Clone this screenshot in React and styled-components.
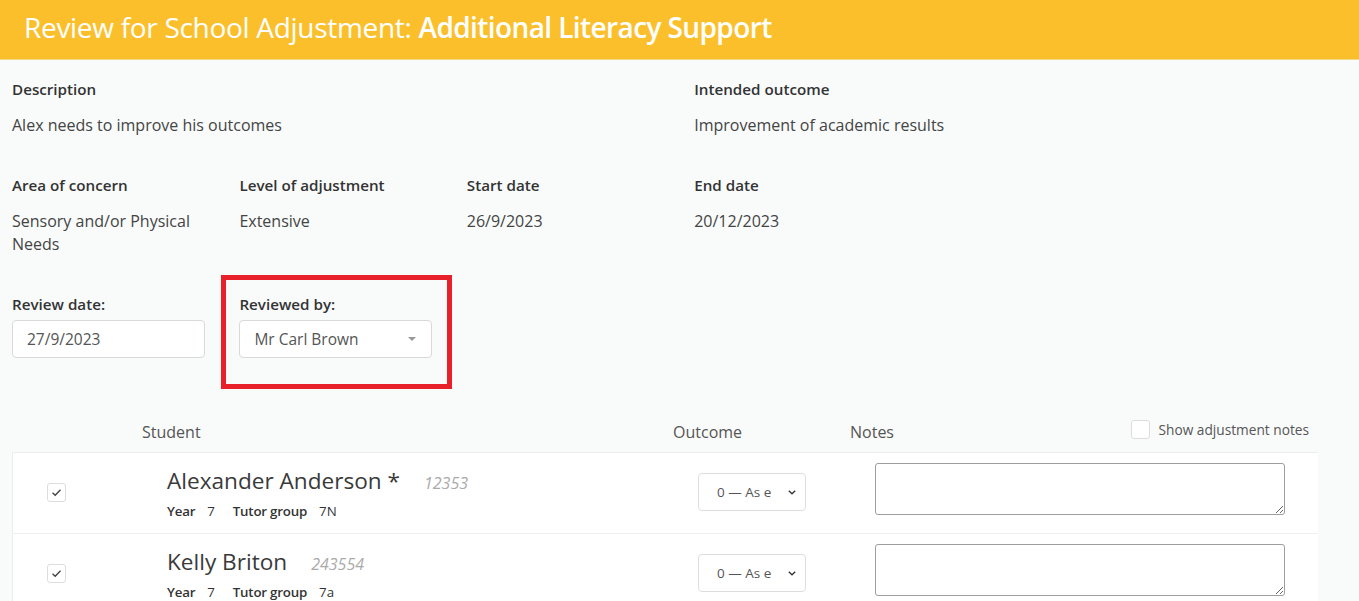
import React from "react";
import styled, { createGlobalStyle } from "styled-components";

const GlobalStyle = createGlobalStyle`
  html, body {
    margin: 0;
    padding: 0;
    background: #f9fbfb;
    font-family: "Open Sans", "Liberation Sans", sans-serif;
    color: #333;
  }
  * { box-sizing: border-box; }
`;

const students = [
  { name: "Alexander Anderson *", id: "12353", year: "7", group: "7N" },
  { name: "Kelly Briton", id: "243554", year: "7", group: "7a" },
];

function App() {
  return (
    <>
      <GlobalStyle />
      <Page>
        <Header>
          Review for School Adjustment: <strong>Additional Literacy Support</strong>
        </Header>

        <Details>
          <Field span={3}>
            <Label>Description</Label>
            <Value>Alex needs to improve his outcomes</Value>
          </Field>
          <Field span={3}>
            <Label>Intended outcome</Label>
            <Value>Improvement of academic results</Value>
          </Field>

          <Field>
            <Label>Area of concern</Label>
            <Value>Sensory and/or Physical Needs</Value>
          </Field>
          <Field>
            <Label>Level of adjustment</Label>
            <Value>Extensive</Value>
          </Field>
          <Field>
            <Label>Start date</Label>
            <Value>26/9/2023</Value>
          </Field>
          <Field span={3}>
            <Label>End date</Label>
            <Value>20/12/2023</Value>
          </Field>

          <FormField>
            <Label>Review date:</Label>
            <TextInput defaultValue="27/9/2023" />
          </FormField>
          <FormField>
            <Label>Reviewed by:</Label>
            <Dropdown>
              <span>Mr Carl Brown</span>
              <Caret />
            </Dropdown>
            <Highlight />
          </FormField>
        </Details>

        <TableHead>
          <HeadCell>Student</HeadCell>
          <HeadCell>Outcome</HeadCell>
          <HeadCell>Notes</HeadCell>
          <ToggleNotes>
            <Box />
            Show adjustment notes
          </ToggleNotes>
        </TableHead>

        <Table>
          {students.map((s) => (
            <Row key={s.id}>
              <CheckCell>
                <Box>
                  <svg width="11" height="9" viewBox="0 0 11 9">
                    <path d="M1.5 4.8 L4.2 7.2 L9.5 1.8" fill="none" stroke="#444" strokeWidth="1.4" />
                  </svg>
                </Box>
              </CheckCell>
              <StudentCell>
                <NameLine>
                  <Name>{s.name}</Name>
                  <StudentId>{s.id}</StudentId>
                </NameLine>
                <Meta>
                  <b>Year</b>
                  <span>{s.year}</span>
                  <b className="gap">Tutor group</b>
                  <span>{s.group}</span>
                </Meta>
              </StudentCell>
              <OutcomeCell>
                <OutcomeSelect>
                  <span>0 — As e</span>
                  <svg width="10" height="7" viewBox="0 0 10 7">
                    <path d="M1.8 1.8 L5 4.8 L8.2 1.8" fill="none" stroke="#333" strokeWidth="1.3" />
                  </svg>
                </OutcomeSelect>
              </OutcomeCell>
              <NotesCell>
                <Notes />
              </NotesCell>
            </Row>
          ))}
        </Table>
      </Page>
    </>
  );
}

export default App;

const Page = styled.div`
  min-height: 601px;
`;

const Header = styled.h1`
  margin: 0;
  height: 60px;
  background: #fcbf2c;
  border-bottom: 1px solid #f4d88a;
  color: #fff;
  font-size: 28px;
  font-weight: 400;
  line-height: 55px;
  padding-left: 24px;
  letter-spacing: -0.3px;

  strong {
    font-weight: 600;
    letter-spacing: -0.6px;
  }
`;

const Details = styled.div`
  display: grid;
  grid-template-columns: repeat(6, 227.4px);
  row-gap: 37px;
  padding: 18px 12px 0;
`;

const Field = styled.div`
  grid-column: span ${(p) => p.span || 1};
  padding-right: 20px;
`;

const Label = styled.div`
  font-size: 15.2px;
  font-weight: 600;
  line-height: 22px;
  color: #333;
`;

const Value = styled.div`
  margin-top: 14px;
  font-size: 16px;
  line-height: 23px;
  color: #444;
`;

const FormField = styled.div`
  position: relative;
  width: 193px;

  ${Label} {
    margin-bottom: 5px;
  }
`;

const TextInput = styled.input`
  width: 193px;
  height: 38px;
  border: 1px solid #d9d9d9;
  border-radius: 4px;
  background: #fff;
  padding: 0 14px;
  font-family: inherit;
  font-size: 15.5px;
  color: #555;
`;

const Dropdown = styled.div`
  width: 193px;
  height: 38px;
  border: 1px solid #d9d9d9;
  border-radius: 4px;
  background: #fff;
  padding: 0 14px;
  display: flex;
  align-items: center;
  justify-content: space-between;
  font-size: 15.5px;
  color: #555;
`;

const Caret = styled.span`
  width: 0;
  height: 0;
  border-left: 4.5px solid transparent;
  border-right: 4.5px solid transparent;
  border-top: 4.5px solid #999;
  margin-right: 1px;
`;

const Highlight = styled.div`
  position: absolute;
  left: -18px;
  top: -18px;
  width: 231px;
  height: 114px;
  border: 5px solid #e8202a;
`;

const TableHead = styled.div`
  display: grid;
  grid-template-columns: 531px 177px 1fr auto;
  align-items: center;
  margin-top: 52px;
  padding: 0 9px 0 142px;
  height: 42px;
  width: 1318px;
`;

const HeadCell = styled.div`
  font-size: 16px;
  color: #555;
  padding-top: 2px;
`;

const ToggleNotes = styled.label`
  display: flex;
  align-items: center;
  gap: 9px;
  font-size: 13.7px;
  color: #555;
  padding-bottom: 3px;
`;

const Box = styled.span`
  width: 19px;
  height: 19px;
  border: 1px solid #ddd;
  border-radius: 3px;
  background: #fff;
  display: inline-flex;
  align-items: center;
  justify-content: center;
`;

const Table = styled.div`
  margin-left: 12px;
  width: 1306px;
  border-top: 1px solid #eceeee;
  border-left: 1px solid #eceeee;
  background: #fff;
`;

const Row = styled.div`
  display: grid;
  grid-template-columns: 154px 531px 177px 410px;
  height: 81px;
  border-bottom: 1px solid #eef0f0;
`;

const CheckCell = styled.div`
  display: flex;
  align-items: center;
  padding-left: 34px;
  padding-bottom: 2px;
`;

const StudentCell = styled.div`
  display: flex;
  flex-direction: column;
  padding-top: 13px;
`;

const NameLine = styled.div`
  display: flex;
  align-items: baseline;
  gap: 24px;
`;

const Name = styled.span`
  font-size: 22.6px;
  line-height: 30px;
  color: #3a3a3a;
`;

const StudentId = styled.span`
  font-size: 16px;
  font-style: italic;
  color: #aaa;
`;

const Meta = styled.div`
  display: flex;
  align-items: baseline;
  gap: 12px;
  font-size: 13.3px;
  line-height: 20px;
  margin-top: 5px;
  color: #333;

  b {
    font-weight: 600;
    letter-spacing: -0.2px;
  }
  .gap {
    margin-left: 6px;
  }
`;

const OutcomeCell = styled.div`
  display: flex;
  align-items: center;
  padding-bottom: 2px;
`;

const OutcomeSelect = styled.div`
  width: 108px;
  height: 38px;
  border: 1px solid #ddd;
  border-radius: 4px;
  background: #fff;
  display: flex;
  align-items: center;
  justify-content: space-between;
  padding: 0 8px 0 18px;
  font-size: 13.5px;
  color: #555;
`;

const NotesCell = styled.div`
  padding-top: 10px;
`;

const Notes = styled.textarea`
  width: 410px;
  height: 52px;
  border: 1px solid #9e9e9e;
  border-radius: 3px;
  background: #fff;
  font-family: inherit;
  display: block;
`;
